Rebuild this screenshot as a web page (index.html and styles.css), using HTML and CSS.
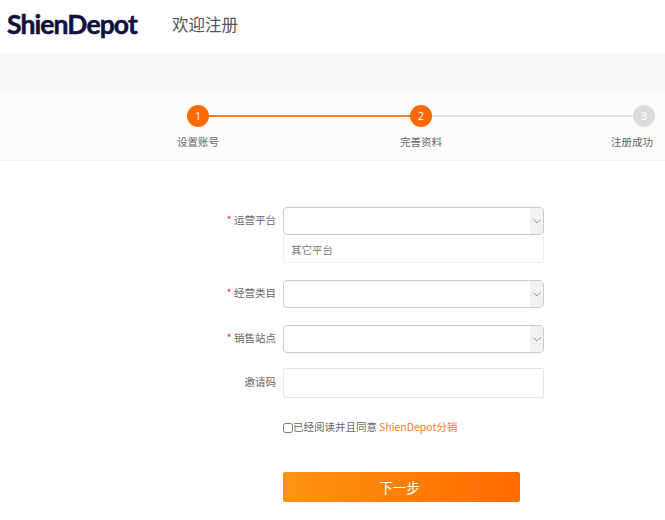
FILE: index.html
```html
<!DOCTYPE html>
<html lang="zh">
<head>
<meta charset="utf-8">
<title>欢迎注册</title>
<link rel="stylesheet" href="styles.css">
</head>
<body>
<header class="top">
  <div class="logo">ShienDepot</div>
  <div class="welcome">欢迎注册</div>
</header>
<div class="band"></div>
<section class="steps">
  <div class="track">
    <div class="step on"><span class="dot">1</span><span class="step-label">设置账号</span></div>
    <div class="line on"></div>
    <div class="step on"><span class="dot">2</span><span class="step-label">完善资料</span></div>
    <div class="line"></div>
    <div class="step last"><span class="dot">3</span><span class="step-label">注册成功</span></div>
  </div>
</section>
<form class="form">
  <div class="row first">
    <div class="label"><span class="req">*</span> 运营平台</div>
    <div class="select"><span class="arrow"><svg width="8" height="5" viewBox="0 0 8 5"><path d="M.5.5 4 4 7.500.5" fill="none" stroke="#999" stroke-width="1"/></svg></span></div>
  </div>
  <div class="other">其它平台</div>
  <div class="row second">
    <div class="label"><span class="req">*</span> 经营类目</div>
    <div class="select"><span class="arrow"><svg width="8" height="5" viewBox="0 0 8 5"><path d="M.5.5 4 4 7.500.5" fill="none" stroke="#999" stroke-width="1"/></svg></span></div>
  </div>
  <div class="row third">
    <div class="label"><span class="req">*</span> 销售站点</div>
    <div class="select"><span class="arrow"><svg width="8" height="5" viewBox="0 0 8 5"><path d="M.5.5 4 4 7.500.5" fill="none" stroke="#999" stroke-width="1"/></svg></span></div>
  </div>
  <div class="row fourth">
    <div class="label">邀请码</div>
    <input class="input" type="text">
  </div>
  <label class="agree"><input class="check" type="checkbox"><span>已经阅读并且同意</span><a class="link">ShienDepot分销</a></label>
  <button class="next" type="button">下一步</button>
</form>
</body>
</html>
```

FILE: styles.css
```css
* { box-sizing: border-box; }
html, body { margin: 0; padding: 0; }
body {
  width: 665px;
  height: 520px;
  overflow: hidden;
  background: #fff;
  font-family: "Noto Sans CJK SC", "Open Sans", sans-serif;
  color: #666;
}
.top {
  height: 53px;
  display: flex;
  align-items: center;
  padding: 0 0 5px 7px;
}
.logo {
  width: 165px;
  font-family: "Lato", sans-serif;
  font-weight: 700;
  font-size: 26.500px;
  letter-spacing: -0.9px;
  color: #12103f;
  line-height: 40px;
  -webkit-text-stroke: 0.5px #12103f;
}
.welcome {
  font-size: 16.500px;
  color: #555;
  line-height: 40px;
}
.band { height: 38px; background: #f6f6f6; }
.steps {
  height: 70px;
  background: #fcfcfc;
  border-bottom: 1px solid #f0f0f0;
  padding: 14px 0 0 187px;
}
.track { display: flex; align-items: flex-start; }
.step { width: 22px; display: flex; flex-direction: column; align-items: center; flex: none; }
.dot {
  width: 22px;
  height: 22px;
  border-radius: 50%;
  background: #dcdcdc;
  color: #fff;
  font-family: "Open Sans", sans-serif;
  font-size: 10.500px;
  line-height: 22px;
  text-align: center;
  flex: none;
}
.step.on .dot { background: #ff6a00; }
.step-label {
  margin-top: 7px;
  font-size: 10.500px;
  line-height: 16px;
  white-space: nowrap;
  color: #666;
}
.step.last .step-label { margin-right: 24px; }
.line { width: 201px; height: 2px; margin-top: 10px; background: #e2e2e2; flex: none; }
.line.on { background: #ff7a1f; }
.form { padding: 46px 0 0 0; }
.row { display: flex; align-items: center; }
.row.second { margin-top: 17px; }
.row.third { margin-top: 17px; }
.row.fourth { margin-top: 15px; }
.label {
  width: 276px;
  text-align: right;
  font-size: 10.500px;
  line-height: 16px;
  margin: 0 7px 2px 0;
  color: #666;
}
.req { color: #e53935; }
.select {
  width: 261px;
  height: 28px;
  border: 1px solid #ccc;
  border-radius: 4px;
  background: #fff;
  display: flex;
  justify-content: flex-end;
  overflow: hidden;
}
.arrow {
  width: 13px;
  background: #f1f1f1;
  display: flex;
  align-items: center;
  justify-content: center;
}
.other {
  width: 261px;
  height: 28px;
  margin-left: 283px;
  border: 1px solid #eee;
  border-top: 0;
  border-radius: 0 0 2px 2px;
  padding-left: 7px;
  font-size: 10.500px;
  line-height: 29px;
  color: #777;
}
.input {
  width: 261px;
  height: 30px;
  border: 1px solid #e6e6e6;
  border-radius: 2px;
  background: #fff;
  padding: 0;
  outline: none;
}
.agree {
  display: flex;
  align-items: center;
  margin: 21px 0 0 283px;
  height: 16px;
  font-size: 10.500px;
  line-height: 16px;
  color: #666;
  white-space: nowrap;
}
.check { width: 10px; height: 10px; margin: 1px 0 0 0; flex: none; }
.link { color: #ff7a2a; margin-left: 2px; font-size: 10.500px; }
.next {
  display: block;
  width: 237px;
  height: 30px;
  margin: 37px 0 0 283px;
  border: 0;
  border-radius: 2px;
  background: linear-gradient(90deg, #fd940f, #ff6a00);
  color: #fff;
  font-family: inherit;
  font-size: 13.500px;
  line-height: 30px;
  padding: 0 4px 0 0;
}
```
